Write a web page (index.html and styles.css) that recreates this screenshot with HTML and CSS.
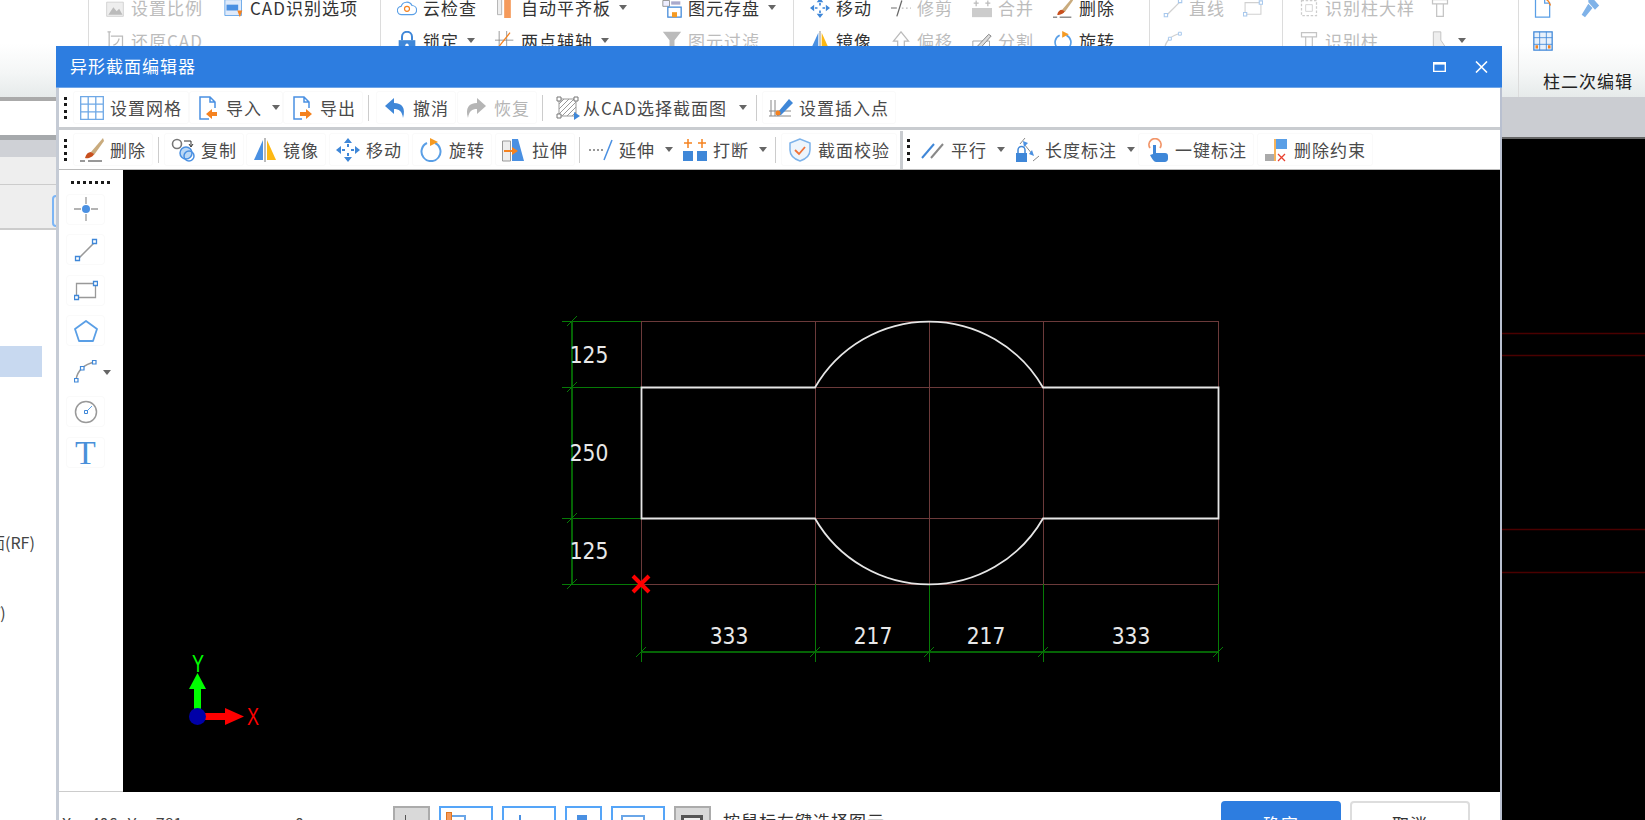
FILE: index.html
```html
<!DOCTYPE html>
<html lang="zh-CN">
<head>
<meta charset="utf-8">
<title>异形截面编辑器</title>
<link rel="stylesheet" href="styles.css">
</head>
<body>
<svg class="defs" aria-hidden="true">
  <symbol id="i-grid" viewBox="0 0 24 24"><path d="M.7.7h22.6v22.6H.7zM8.2.7v22.6M15.8.7v22.6M.7 8.2h22.6M.7 15.8h22.6" fill="none" stroke="#6ea8e6" stroke-width="1.3"/></symbol>
  <symbol id="i-import" viewBox="0 0 24 24"><path d="M13 23H4V1h10l5 5v6M14 1v5h5" fill="none" stroke="#4a90e2" stroke-width="1.5"/><path d="M21 16h-5v-3l-6 5 6 5v-3h5z" fill="#f5821f"/></symbol>
  <symbol id="i-export" viewBox="0 0 24 24"><path d="M12 23H4V1h10l5 5v6M14 1v5h5" fill="none" stroke="#4a90e2" stroke-width="1.5"/><path d="M10 16h6v-3l6 5-6 5v-3h-6z" fill="#f5821f"/></symbol>
  <symbol id="i-undo" viewBox="0 0 24 24"><path d="M11 2 2 10l9 8v-5c5 0 8 2 9 9 3-10-1-15-9-15z" fill="#3f87d8"/></symbol>
  <symbol id="i-redo" viewBox="0 0 24 24"><path d="m13 2 9 8-9 8v-5c-5 0-8 2-9 9-3-10 1-15 9-15z" fill="#b5b5b5"/></symbol>
  <symbol id="i-cad" viewBox="0 0 24 24"><path d="M3 3h17v17H3z" fill="#fff" stroke="#999"/><path d="M3 8l5-5M3 13 13 3M3 18 18 3M6 20 20 6M11 20l9-9M16 20l4-4" stroke="#999"/><path d="M1 1h4v4H1zM18 1h4v4h-4zM1 18h4v4H1z" fill="#fff" stroke="#777"/><path d="M18 16v8l6-4z" fill="#3f87d8"/></symbol>
  <symbol id="i-insert" viewBox="0 0 24 24"><path d="M2 4v16M6 4v16M0 15h22M0 20h22" stroke="#888"/><path d="M9 16 20 3l4 4-12 12-4 1z" fill="#3f87d8"/><circle cx="9" cy="17" r="2.5" fill="#f5821f"/></symbol>
  <symbol id="i-brush" viewBox="0 0 24 24"><path d="m23 0-12 14 3 3L24 3z" fill="#c9ab7d"/><path d="M11 14c-3 0-5 2-6 6 3 1 8-1 9-4z" fill="#c8501e"/><path d="M0 23h5M8 23h14" stroke="#333"/></symbol>
  <symbol id="i-copy" viewBox="0 0 24 24"><circle cx="6" cy="6" r="4.5" fill="none" stroke="#777" stroke-width="1.6"/><circle cx="15" cy="15" r="6" fill="#bcd8f5" stroke="#4a90e2" stroke-width="1.5"/><circle cx="18" cy="18" r="5" fill="none" stroke="#4a90e2" stroke-width="1.5"/><path d="M13 3h7v5m-2-2 2 3 2-3" fill="none" stroke="#333"/></symbol>
  <symbol id="i-mirror" viewBox="0 0 24 24"><path d="M10 2v20L1 22z" fill="#4a90e2"/><path d="M12 0v24" stroke="#777"/><path d="M14 2v20h9z" fill="#fdb813"/></symbol>
  <symbol id="i-move" viewBox="0 0 24 24"><path d="M12 0l4 5H8zM12 24l-4-5h8zM0 12l5-4v8zM24 12l-5 4V8z" fill="#3f87d8"/><path d="M12 6v3M12 15v3M6 12h3M15 12h3" stroke="#3f87d8" stroke-width="2"/></symbol>
  <symbol id="i-rotate" viewBox="0 0 24 24"><path d="M8 5a9.500 9.500 0 1 0 8 0" fill="none" stroke="#5a9fe6" stroke-width="2"/><path d="M11 0v8l8-4z" fill="#f59a23"/></symbol>
  <symbol id="i-stretch" viewBox="0 0 24 24"><path d="M.5 3h8v20h-8z" fill="#eee" stroke="#999"/><path d="M10 1h6l6 22H10z" fill="#4a90e2"/><path d="M2 13h10" stroke="#f5821f" stroke-width="2"/><path d="M10 9l6 4-6 4z" fill="#f5821f"/></symbol>
  <symbol id="i-extend" viewBox="0 0 24 24"><path d="M0 12h2M4 12h2M8 12h2M12 12h2" stroke="#777" stroke-width="1.500"/><path d="M23 2 15 22" stroke="#4a90e2" stroke-width="1.500"/></symbol>
  <symbol id="i-break" viewBox="0 0 24 24"><path d="M0 13h10v10H0zM14 13h10v10H14z" fill="#3f87d8"/><path d="M5 1v9M1 5h8M19 1v9M15 5h8" stroke="#f5821f" stroke-width="1.500"/></symbol>
  <symbol id="i-shield" viewBox="0 0 24 24"><path d="M12 1 2 5v7c0 5 4 9 10 11 6-2 10-6 10-11V5z" fill="#eef5fc" stroke="#7db3ea" stroke-width="1.500"/><path d="m7 12 4 4 6-7" fill="none" stroke="#f0733a" stroke-width="1.800"/></symbol>
  <symbol id="i-parallel" viewBox="0 0 24 24"><path d="M1 20 13 6" stroke="#3f87d8" stroke-width="2"/><path d="M10 20 22 6" stroke="#888" stroke-width="2"/></symbol>
  <symbol id="i-dim" viewBox="0 0 24 24"><path d="M5 6 10 0M9 6l9 11M18 23l6-5" stroke="#888" fill="none"/><path d="M8 3l5 2-4 4zM19 18l-5-2 3-4z" fill="#4a90e2"/><path d="M1 15h11v9H1z" fill="#3f87d8"/><path d="M3 15v-3a3.500 3.500 0 0 1 7 0v3" fill="none" stroke="#3f87d8" stroke-width="1.500"/></symbol>
  <symbol id="i-touch" viewBox="0 0 24 24"><path d="M5 10a6 6 0 1 1 10 0" fill="none" stroke="#f2966a" stroke-width="1.800"/><path d="M8 7h3v8h9c2 0 3 1 3 3v3c0 2-2 3-3 3H11c-2 0-4-3-6-7l3-1z" fill="#3f87d8"/></symbol>
  <symbol id="i-delc" viewBox="0 0 24 24"><path d="M12 1h11v10H12z" fill="#5a9fe6"/><path d="M1 16h9v7H1z" fill="#aaa"/><path d="M11 1v22" stroke="#f59a23" stroke-width="1.500"/><path d="m14 16 7 7m0-7-7 7" stroke="#e8402f" stroke-width="1.300"/></symbol>
  <symbol id="i-point" viewBox="0 0 24 24"><path d="M12 0v7M12 17v7M0 12h7M17 12h7" stroke="#9a9a9a" stroke-width="1.300"/><circle cx="12" cy="12" r="4" fill="#4a90e2"/></symbol>
  <symbol id="i-line" viewBox="0 0 24 24"><path d="M4 21 21 4" stroke="#999" stroke-width="1.500"/><path d="M1.500 18.500h4v4h-4zM18.500 1.500h4v4h-4z" fill="#fff" stroke="#3f87d8" stroke-width="1.300"/></symbol>
  <symbol id="i-rect" viewBox="0 0 24 24"><path d="M2.500 5.500h19v14h-19z" fill="none" stroke="#999" stroke-width="1.300"/><path d="M.5 17.500h4v4h-4zM19.500 3.500h4v4h-4z" fill="#fff" stroke="#3f87d8" stroke-width="1.300"/></symbol>
  <symbol id="i-penta" viewBox="0 0 24 24"><path d="M12 2 23 10l-4 12H5L1 10z" fill="none" stroke="#5a9fe6" stroke-width="1.800" stroke-linejoin="round"/></symbol>
  <symbol id="i-arc" viewBox="0 0 24 24"><path d="M2 21C3 12 10 5 21 3" fill="none" stroke="#999" stroke-width="1.500"/><path d="M.5 19.500h3.500v3.500H.5zM6.500 7.500h3.500v3.500H6.500zM18.500 1.500h3.500v3.500h-3.500z" fill="#fff" stroke="#3f87d8" stroke-width="1.200"/></symbol>
  <symbol id="i-circle" viewBox="0 0 24 24"><circle cx="12" cy="12" r="10.500" fill="none" stroke="#999" stroke-width="1.500"/><path d="m12 12 6-6" stroke="#5a9fe6"/><path d="M10.500 10.500h3v3h-3z" fill="#fff" stroke="#3f87d8"/></symbol>
  <symbol id="i-pic" viewBox="0 0 24 24"><path d="M2 5h20v17H2z" fill="#eee" stroke="#ccc"/><path d="m4 20 6-9 4 5 3-3 4 7z" fill="#bbb"/></symbol>
  <symbol id="i-cadfile" viewBox="0 0 24 24"><path d="M1 2h20v19H1z" fill="#dfeafa" stroke="#5a9fe6"/><path d="M3 8h14v7H3z" fill="#4a90e2"/><path d="M16 15h6l-3 8z" fill="#f5821f"/></symbol>
  <symbol id="i-restore" viewBox="0 0 24 24"><path d="M3 1h4M5 1v22M3 23h4M7 6h14v16H7" fill="none" stroke="#bbb" stroke-width="1.500"/><path d="M10 17c4-1 6-4 7-8" fill="none" stroke="#bbb" stroke-width="1.500"/></symbol>
  <symbol id="i-cloud" viewBox="0 0 24 24"><path d="M6 20a5 5 0 0 1-1-10 7 7 0 0 1 13-1 5.500 5.500 0 0 1 0 11z" fill="#fff" stroke="#5a9fe6" stroke-width="1.400"/><circle cx="12" cy="13" r="3" fill="none" stroke="#f5821f" stroke-width="1.400"/></symbol>
  <symbol id="i-align" viewBox="0 0 24 24"><path d="M3 0h5v20H3z" fill="#eee" stroke="#aaa"/><path d="M11 0h8v24h-8z" fill="#f59a5b"/></symbol>
  <symbol id="i-save" viewBox="0 0 24 24"><path d="M1 3h8v7H1z" fill="#eef" stroke="#888"/><path d="M11 4h11v4H11z" fill="#aac"/><path d="M7 11h16v12H7z" fill="#fff" stroke="#3f87d8" stroke-width="1.500"/><path d="M12 17h6v6h-6z" fill="#f59a23"/></symbol>
  <symbol id="i-lock" viewBox="0 0 24 24"><path d="M2 11h20v13H2z" fill="#3f87d8"/><path d="M6 11V7a6 6 0 0 1 12 0v4" fill="none" stroke="#3f87d8" stroke-width="2.400"/><circle cx="12" cy="17" r="2" fill="#fff"/></symbol>
  <symbol id="i-axis" viewBox="0 0 24 24"><path d="M5 0v22M0 11h22M14 0v22" stroke="#888"/><path d="M2 22 18 2" stroke="#f5821f" stroke-width="1.500"/></symbol>
  <symbol id="i-filter" viewBox="0 0 24 24"><path d="M1 1h22l-8 10v12l-6-3v-9z" fill="#bbb"/></symbol>
  <symbol id="i-trim" viewBox="0 0 24 24"><path d="M0 12h7" stroke="#888" stroke-width="1.500"/><path d="M13 3 7 22" stroke="#666" stroke-width="1.500"/><path d="M13 12h2M18 12h2M23 12h1" stroke="#bbb" stroke-width="1.500"/></symbol>
  <symbol id="i-merge" viewBox="0 0 24 24"><path d="M0 12h24v11H0z" fill="#ccc"/><path d="M5 3v7M19 3v7M2 6h6M16 6h6" stroke="#bbb" stroke-width="1.500"/></symbol>
  <symbol id="i-offset" viewBox="0 0 24 24"><path d="M8 24V12H3l9-11 9 11h-5v12" fill="none" stroke="#bbb" stroke-width="1.500"/></symbol>
  <symbol id="i-split" viewBox="0 0 24 24"><path d="M1 12h20v10H1z" fill="none" stroke="#999"/><path d="m3 22 17-18 3 2L7 24z" fill="#ddd" stroke="#777"/></symbol>
  <symbol id="i-sample" viewBox="0 0 24 24"><path d="M3 3h18v18H3z" fill="none" stroke="#ccc" stroke-width="1.500" stroke-dasharray="3 2"/><path d="M8 8h8v8H8z" fill="none" stroke="#ccc"/></symbol>
  <symbol id="i-column" viewBox="0 0 24 24"><path d="M3 2h18v5H3zM8 7v15h8V7" fill="none" stroke="#c4c4c4" stroke-width="1.500"/></symbol>
  <symbol id="i-shape" viewBox="0 0 24 24"><path d="M4 1h9v10l8 12H4z" fill="#eee" stroke="#bbb"/></symbol>
  <symbol id="i-paper" viewBox="0 0 24 24"><path d="M3 1h11v5h6v17H3z" fill="#fff" stroke="#5a9fe6" stroke-width="1.500"/><path d="M14 1c4 1 6 4 7 8" fill="none" stroke="#f5821f" stroke-width="1.500"/></symbol>
  <symbol id="i-hammer" viewBox="0 0 24 24"><path d="M10 0h5l8 9-5 5-8-9zM10 7l5 5-9 11-4-3z" fill="#7fb2e8"/></symbol>
  <symbol id="i-colgrid" viewBox="0 0 24 24"><path d="M1 1h22v22H1z" fill="#e8f1fb" stroke="#3f87d8" stroke-width="1.500"/><path d="M8 1v22M16 1v22M1 8h22M1 16h22" stroke="#3f87d8"/><path d="M3 17h3v4H3zM18 17h3v4h-3z" fill="#f5821f"/></symbol>
</svg>

<header class="ribbon">
  <div class="ribbon-blank"></div>
  <section class="group group-a">
    <div class="group-rows">
      <div class="ri off"><svg class="ri-icon"><use href="#i-pic"/></svg><span>设置比例</span></div>
      <div class="ri"><svg class="ri-icon"><use href="#i-cadfile"/></svg><span>CAD识别选项</span></div>
      <div class="ri off"><svg class="ri-icon"><use href="#i-restore"/></svg><span>还原CAD</span></div>
    </div>
  </section>
  <section class="group group-b">
    <div class="group-rows">
      <div class="ri"><svg class="ri-icon"><use href="#i-cloud"/></svg><span>云检查</span></div>
      <div class="ri"><svg class="ri-icon"><use href="#i-align"/></svg><span>自动平齐板</span><i class="caret"></i></div>
      <div class="ri"><svg class="ri-icon"><use href="#i-save"/></svg><span>图元存盘</span><i class="caret"></i></div>
      <div class="ri"><svg class="ri-icon"><use href="#i-lock"/></svg><span>锁定</span><i class="caret"></i></div>
      <div class="ri"><svg class="ri-icon"><use href="#i-axis"/></svg><span>两点辅轴</span><i class="caret"></i></div>
      <div class="ri off"><svg class="ri-icon"><use href="#i-filter"/></svg><span>图元过滤</span></div>
    </div>
  </section>
  <section class="group group-c">
    <div class="group-rows">
      <div class="ri"><svg class="ri-icon"><use href="#i-move"/></svg><span>移动</span></div>
      <div class="ri off"><svg class="ri-icon"><use href="#i-trim"/></svg><span>修剪</span></div>
      <div class="ri off"><svg class="ri-icon"><use href="#i-merge"/></svg><span>合并</span></div>
      <div class="ri"><svg class="ri-icon"><use href="#i-brush"/></svg><span>删除</span></div>
      <div class="ri"><svg class="ri-icon"><use href="#i-mirror"/></svg><span>镜像</span></div>
      <div class="ri off"><svg class="ri-icon"><use href="#i-offset"/></svg><span>偏移</span></div>
      <div class="ri off"><svg class="ri-icon"><use href="#i-split"/></svg><span>分割</span></div>
      <div class="ri"><svg class="ri-icon"><use href="#i-rotate"/></svg><span>旋转</span></div>
    </div>
  </section>
  <section class="group group-d">
    <div class="group-rows">
      <div class="ri off"><svg class="ri-icon ghost"><use href="#i-line"/></svg><span>直线</span></div>
      <div class="ri off"><svg class="ri-icon ghost"><use href="#i-rect"/></svg></div>
      <div class="ri off"><svg class="ri-icon ghost"><use href="#i-arc"/></svg></div>
    </div>
  </section>
  <section class="group group-e">
    <div class="group-rows">
      <div class="ri off"><svg class="ri-icon"><use href="#i-sample"/></svg><span>识别柱大样</span></div>
      <div class="ri off"><svg class="ri-icon"><use href="#i-column"/></svg></div>
      <div class="ri off"><svg class="ri-icon"><use href="#i-column"/></svg><span>识别柱</span></div>
      <div class="ri off"><svg class="ri-icon"><use href="#i-shape"/></svg><i class="caret"></i></div>
    </div>
  </section>
  <section class="group group-f">
    <div class="group-rows">
      <div class="ri"><svg class="ri-icon"><use href="#i-paper"/></svg></div>
      <div class="ri"><svg class="ri-icon"><use href="#i-hammer"/></svg></div>
      <div class="ri"><svg class="ri-icon"><use href="#i-colgrid"/></svg></div>
    </div>
    <div class="group-label">柱二次编辑</div>
  </section>
</header>

<main class="workspace">
  <aside class="side">
    <div class="side-gap"></div>
    <div class="side-head"></div>
    <div class="side-band"></div>
    <div class="side-tabs"><span class="side-tab"></span></div>
    <div class="side-row"></div>
    <div class="side-text side-rf">面(RF)</div>
    <div class="side-text side-v">V)</div>
  </aside>
  <div class="middle"></div>
  <div class="backdrop">
    <div class="backdrop-band"></div>
    <svg class="backdrop-canvas" viewBox="1502 139 143 681">
      <path class="cad-red" d="M1502 333.500h143M1502 355.500h143M1502 529.500h143M1502 572.500h143"/>
    </svg>
  </div>
</main>

<div class="dialog">
  <div class="titlebar">
    <span class="title">异形截面编辑器</span>
    <svg class="win-max" viewBox="0 0 13 10"><path d="M.7 1.500h11.600v8H.7z" fill="none" stroke="#fff" stroke-width="1.400"/><path d="M0 0h13v2.500H0z" fill="#fff"/></svg>
    <svg class="win-close" viewBox="0 0 13 12"><path d="m1 .5 11 11m0-11-11 11" fill="none" stroke="#fff" stroke-width="1.600"/></svg>
  </div>
  <div class="dialog-body">
    <div class="toolbar">
      <i class="grip"></i>
      <div class="btn"><svg class="icon"><use href="#i-grid"/></svg><span>设置网格</span></div>
      <div class="btn has-caret"><svg class="icon"><use href="#i-import"/></svg><span>导入</span><i class="caret"></i></div>
      <div class="btn"><svg class="icon"><use href="#i-export"/></svg><span>导出</span></div>
      <i class="sep"></i>
      <div class="btn ml2"><svg class="icon"><use href="#i-undo"/></svg><span>撤消</span></div>
      <div class="btn ml1 off"><svg class="icon"><use href="#i-redo"/></svg><span>恢复</span></div>
      <i class="sep"></i>
      <div class="btn has-caret tight plain"><svg class="icon"><use href="#i-cad"/></svg><span>从CAD选择截面图</span><i class="caret"></i></div>
      <i class="sep"></i>
      <div class="btn"><svg class="icon"><use href="#i-insert"/></svg><span>设置插入点</span></div>
    </div>
    <div class="toolbar toolbar-second">
      <i class="grip"></i>
      <div class="btn"><svg class="icon"><use href="#i-brush"/></svg><span>删除</span></div>
      <i class="sep"></i>
      <div class="btn"><svg class="icon"><use href="#i-copy"/></svg><span>复制</span></div>
      <div class="btn ml2"><svg class="icon"><use href="#i-mirror"/></svg><span>镜像</span></div>
      <div class="btn ml3"><svg class="icon"><use href="#i-move"/></svg><span>移动</span></div>
      <div class="btn ml3"><svg class="icon"><use href="#i-rotate"/></svg><span>旋转</span></div>
      <div class="btn ml3"><svg class="icon"><use href="#i-stretch"/></svg><span>拉伸</span></div>
      <i class="sep sep-tight"></i>
      <div class="btn has-caret plain"><svg class="icon"><use href="#i-extend"/></svg><span>延伸</span><i class="caret"></i></div>
      <div class="btn has-caret plain"><svg class="icon"><use href="#i-break"/></svg><span>打断</span><i class="caret"></i></div>
      <i class="sep"></i>
      <div class="btn"><svg class="icon"><use href="#i-shield"/></svg><span>截面校验</span></div>
      <i class="divider"></i>
      <i class="grip grip-inner"></i>
      <div class="btn has-caret plain"><svg class="icon"><use href="#i-parallel"/></svg><span>平行</span><i class="caret"></i></div>
      <div class="btn has-caret plain"><svg class="icon"><use href="#i-dim"/></svg><span>长度标注</span><i class="caret"></i></div>
      <div class="btn"><svg class="icon"><use href="#i-touch"/></svg><span>一键标注</span></div>
      <div class="btn ml3"><svg class="icon"><use href="#i-delc"/></svg><span>删除约束</span></div>
    </div>
    <div class="work">
      <nav class="tools">
        <i class="grip-h"></i>
        <div class="tool"><svg class="tool-icon"><use href="#i-point"/></svg></div>
        <div class="tool"><svg class="tool-icon"><use href="#i-line"/></svg></div>
        <div class="tool"><svg class="tool-icon"><use href="#i-rect"/></svg></div>
        <div class="tool"><svg class="tool-icon"><use href="#i-penta"/></svg></div>
        <div class="tool tool-arc"><svg class="tool-icon"><use href="#i-arc"/></svg><i class="caret"></i></div>
        <div class="tool"><svg class="tool-icon"><use href="#i-circle"/></svg></div>
        <div class="tool tool-text">T</div>
      </nav>
      <svg class="canvas" viewBox="124 170 1377 622" aria-label="截面画布">
        <path class="cad-grid" d="M642 321.500h577M642 387.500h577M642 518.500h577M642 584.500h577M642.500 321v263M816.500 321v263M930.500 321v263M1044.500 321v263M1219.500 321v263"/>
        <path class="cad-dim" d="M563 321.500h79M563 387.500h79M563 518.500h79M563 584.500h79M573.500 321v263M642.500 584v78M816.500 584v78M930.500 584v78M1044.500 584v78M1219.500 584v78"/>
        <path class="cad-dimline" d="M642 652h577M573 321v263"/>
        <path class="cad-dim" d="m568 326 10-10M568 392l10-10M568 523l10-10M568 589l10-10M637 657l10-10M811 657l10-10M925 657l10-10M1039 657l10-10M1214 657l10-10"/>
        <path class="cad-shape" d="M642.500 387.500H816A131.500 131.500 0 0 1 1044 387.500H1219.500V518.500H1044A131.500 131.500 0 0 1 816 518.500H642.500Z"/>
        <g class="cad-label">
          <text x="590" y="363">125</text>
          <text x="590" y="461">250</text>
          <text x="590" y="559">125</text>
          <text x="730" y="644">333</text>
          <text x="874" y="644">217</text>
          <text x="987" y="644">217</text>
          <text x="1132" y="644">333</text>
        </g>
        <path class="cad-origin" d="m634 576 16 16m0-16-16 16"/>
        <path class="axis-y" d="M195 689h7v22h-7zM198.500 673l8.500 16h-17z"/>
        <path class="axis-x" d="M206 713h20v7h-20zM245 716.500l-19 8.500v-17z"/>
        <ellipse class="axis-o" cx="198.500" cy="716.500" rx="8.500" ry="8.500"/>
        <text class="axis-label axis-label-y" x="199" y="672" textLength="12" lengthAdjust="spacingAndGlyphs">Y</text>
        <text class="axis-label axis-label-x" x="254" y="725" textLength="12" lengthAdjust="spacingAndGlyphs">X</text>
      </svg>
    </div>
    <footer class="footer">
      <span class="coord">X= 406 Y= 781</span>
      <span class="zero">0</span>
      <div class="snap snap-on snap-s"><i class="snap-tick"></i></div>
      <div class="snap snap-w"><i class="snap-box"><i class="snap-flag"></i></i></div>
      <div class="snap snap-w"><i class="snap-plus"></i></div>
      <div class="snap snap-s snap-center"><i class="snap-fill"></i></div>
      <div class="snap snap-w"><i class="snap-box snap-wide"></i></div>
      <div class="snap snap-on snap-s snap-last"><i class="snap-dark"></i></div>
      <span class="hint">按鼠标左键选择图元</span>
      <button class="action primary">确定</button>
      <button class="action">取消</button>
    </footer>
  </div>
</div>
</body>
</html>
```
FILE: styles.css
```css
* { box-sizing: border-box; }
html, body { margin: 0; padding: 0; width: 1645px; height: 820px; overflow: hidden; background: #fff; }
body {
  position: relative;
  display: flex;
  flex-direction: column;
  font-family: "Noto Sans CJK SC", "Noto Sans", sans-serif;
  font-size: 17px;
  letter-spacing: 1px;
  color: #4a4a4a;
}
.defs { position: absolute; width: 0; height: 0; }
i { display: block; font-style: normal; }
.caret { width: 0; height: 0; flex: none; border: 4px solid transparent; border-bottom: 0; border-top: 5px solid #666; }

/* ribbon */
.ribbon { display: flex; height: 97px; flex: none; overflow: hidden; background: linear-gradient(#fff 45%, #f4f6f6 75%, #e6eaea); color: #333; }
.ribbon-blank { width: 88px; flex: none; }
.group { flex: none; padding-left: 16px; border-left: 1px solid #dcdcdc; margin-top: -9px; }
.group-rows { display: grid; grid-auto-rows: 33px; }
.group-rows > :nth-child(n) { align-self: start; height: 33px; }
.group-a { width: 292px; }
.group-a .group-rows { grid-template-columns: 119px auto; }
.group-a .group-rows > :nth-child(3) { grid-column: 1; }
.group-b { width: 413px; }
.group-b .group-rows { grid-template-columns: 98px 167px auto; }
.group-c { width: 356px; }
.group-c .group-rows { grid-template-columns: 81px 81px 81px auto; }
.group-d { width: 133px; padding-left: 13px; }
.group-d .group-rows { grid-template-columns: 80px auto; }
.group-e { width: 236px; }
.group-e .group-rows { grid-template-columns: 131px auto; }
.group-f { width: 127px; padding-left: 14px; }
.group-f .group-rows { grid-template-columns: 47px auto; }
.group-label { margin: 12px 0 0 10px; line-height: 24px; color: #222; }
.ri { display: flex; align-items: center; gap: 6px; white-space: nowrap; }
.ri .caret { margin-left: 2px; }
.ri.off { color: #bcbcbc; }
.ri-icon { width: 20px; height: 20px; flex: none; }
.ghost { opacity: .45; }

/* background application */
.workspace { flex: 1; display: flex; min-height: 0; }
.side { width: 60px; flex: none; display: flex; flex-direction: column; overflow: hidden; }
.side-gap { height: 38px; flex: none; border-top: 4px solid #aaa; background: #fff; }
.side-head { height: 5px; flex: none; background: #a6a9ac; }
.side-band { height: 17px; flex: none; background: #cfd1d6; }
.side-tabs { height: 73px; flex: none; padding: 38px 0 0 52px; background: #eee; border-bottom: 2px solid #ccc; box-shadow: inset 0 -43px 0 #eee, inset 0 -44px 0 #ccc; }
.side-tab { display: block; width: 20px; height: 32px; border: 2px solid #7cb5f5; border-radius: 4px; }
.side-row { width: 42px; height: 31px; margin-top: 116px; flex: none; background: #c8d9f0; }
.side-text { white-space: nowrap; font-size: 16px; line-height: 24px; letter-spacing: 0; color: #444; }
.side-rf { margin: 153px 0 0 -11px; }
.side-v { margin: 46px 0 0 -9px; }
.middle { flex: 1; }
.backdrop { width: 143px; flex: none; display: flex; flex-direction: column; background: #000; }
.backdrop-band { height: 42px; flex: none; background: #cbcdd2; border-bottom: 2px solid #666; }
.backdrop-canvas { width: 143px; height: 681px; flex: none; }
.cad-red { fill: none; stroke: #4a0000; stroke-width: 1.500; }

/* dialog window */
.dialog { position: absolute; left: 56px; top: 46px; width: 1446px; height: 774px; display: flex; flex-direction: column; background: #fff; }
.titlebar { height: 42px; flex: none; display: flex; align-items: center; padding-left: 14px; background: #2d7de0; border-bottom: 1px solid #6ea5e8; color: #fff; }
.title { flex: 1; position: relative; top: -1px; }
.win-max { width: 13px; height: 10px; margin-right: 29px; }
.win-close { width: 13px; height: 12px; margin-right: 14px; }
.dialog-body { flex: 1; min-height: 0; display: flex; flex-direction: column; border-left: 3px solid #c5cbd5; border-right: 2px solid #b9c0d0; }
.toolbar { height: 42px; flex: none; display: flex; align-items: center; padding: 0 0 0 5px; border-bottom: 3px solid #c9ccd0; white-space: nowrap; }
.toolbar-second { height: 40px; border-bottom: 1px solid #bbb; }
.grip { width: 3px; height: 22px; flex: none; margin-right: 6px; background: repeating-linear-gradient(#1a1a1a 0 3px, transparent 3px 6.300px); }
.grip-inner { margin: 0 4px 0 4px; }
.btn { height: 33px; flex: none; display: flex; align-items: center; gap: 6px; padding: 0 7px; border-radius: 3px; box-shadow: inset 0 0 0 1px #fafafa; }
.btn .caret { margin-left: 4px; }
.btn.has-caret { padding-right: 3px; }
.btn.plain { box-shadow: none; }
.btn.tight { gap: 3px; margin-left: 1px; padding-right: 4px; }
.btn.tight .caret { margin-left: 9px; }
.btn.off { color: #b5b5b5; }
.ml1 { margin-left: 1px; }
.ml2 { margin-left: 2px; }
.ml3 { margin-left: 3px; }
.icon { width: 24px; height: 24px; flex: none; }
.sep { width: 1px; height: 26px; flex: none; margin: 0 5px; background: #ccc; }
.sep-tight { margin: 0 2px 0 4px; }
.divider { width: 3px; height: 38px; flex: none; margin-left: 3px; background: #c9ccd0; }

/* canvas area */
.work { height: 622px; flex: none; display: flex; }
.tools { width: 64px; flex: none; display: flex; flex-direction: column; align-items: flex-start; gap: 9.500px; padding: 11px 0 0 7px; border-bottom: 1px solid #ccc; }
.grip-h { width: 39px; height: 3px; margin: 0 0 0 5px; background: repeating-linear-gradient(90deg, #1a1a1a 0 3px, transparent 3px 6px); }
.tool { position: relative; width: 39px; height: 31px; display: flex; align-items: center; justify-content: center; border-radius: 4px; box-shadow: inset 0 0 0 1px #fafafa; }
.tool-icon { width: 24px; height: 24px; }
.tool-arc { box-shadow: none; }
.tool-arc .caret { position: absolute; right: -6px; top: 14px; }
.tool-text { font-family: "Liberation Serif", serif; font-size: 34px; line-height: 31px; letter-spacing: 0; color: #4a90d9; }
.canvas { width: 1377px; height: 622px; flex: none; display: block; background: #000; }
.cad-grid { fill: none; stroke: #6b3a3a; }
.cad-dim { fill: none; stroke: #067a06; }
.cad-dimline { fill: none; stroke: #056405; stroke-width: 2; }
.cad-shape { fill: none; stroke: #e6e6e6; stroke-width: 1.800; }
.cad-label text { fill: #e8e8e8; font-family: "DejaVu Sans Condensed", "DejaVu Sans", sans-serif; font-size: 22.500px; letter-spacing: 0; text-anchor: middle; }
.cad-origin { fill: none; stroke: #f00; stroke-width: 4; }
.axis-y { fill: #0f0; }
.axis-x { fill: #f00; }
.axis-o { fill: #0000a8; }
.axis-label { font-family: "Liberation Sans", sans-serif; font-size: 24px; letter-spacing: 0; text-anchor: middle; }
.axis-label-y { fill: #0f0; }
.axis-label-x { fill: #f00; }

/* footer */
.footer { flex: 1; min-height: 0; display: flex; align-items: flex-start; padding: 9px 30px 0 3px; overflow: hidden; }
.coord { width: 233px; margin-top: 12px; flex: none; font-size: 16px; line-height: 20px; letter-spacing: 0; word-spacing: 7px; color: #444; }
.zero { width: 98px; margin-top: 12px; flex: none; font-size: 16px; line-height: 20px; letter-spacing: 0; }
.snap { height: 34px; margin: 5px 9px 0 0; flex: none; padding: 7px 0 0 7px; border: 2px solid #55a5f8; background: #fff; }
.snap-s { width: 37px; }
.snap-w { width: 54px; }
.snap-on { border-color: #ababab; background: #d9d9d9; }
.snap-tick { width: 1px; height: 14px; margin-left: 3px; background: #555; }
.snap-box { position: relative; width: 18px; height: 14px; border: 2px solid #6aa6e8; border-bottom: 0; }
.snap-wide { width: 24px; margin-left: 1px; }
.snap-flag { position: absolute; left: -4px; top: -5px; width: 6px; height: 10px; background: #f59a5b; border: 1px solid #e0761f; }
.snap-plus { width: 11px; height: 14px; margin-left: 3px; background: linear-gradient(#4a90e2, #4a90e2) center 7px / 11px 2px no-repeat, linear-gradient(#4a90e2, #4a90e2) center / 2px 14px no-repeat; }
.snap-center { padding-left: 10px; }
.snap-fill { width: 10px; height: 14px; background: #4a90e2; }
.snap-dark { width: 22px; height: 14px; margin-left: -1px; border: 3px solid #555; border-bottom: 0; background: #eee; }
.snap-last { margin-right: 10px; padding-left: 6px; }
.hint { flex: 1; margin-top: 8px; margin-left: 2px; line-height: 24px; color: #333; white-space: nowrap; }
.action { width: 120px; height: 44px; flex: none; margin-left: 9px; padding: 0; border: 2px solid #ddd; border-radius: 4px; background: #fff; font: inherit; letter-spacing: 1px; color: #333; }
.action.primary { border-color: #2d7de0; background: #2d7de0; color: #fff; }
```
